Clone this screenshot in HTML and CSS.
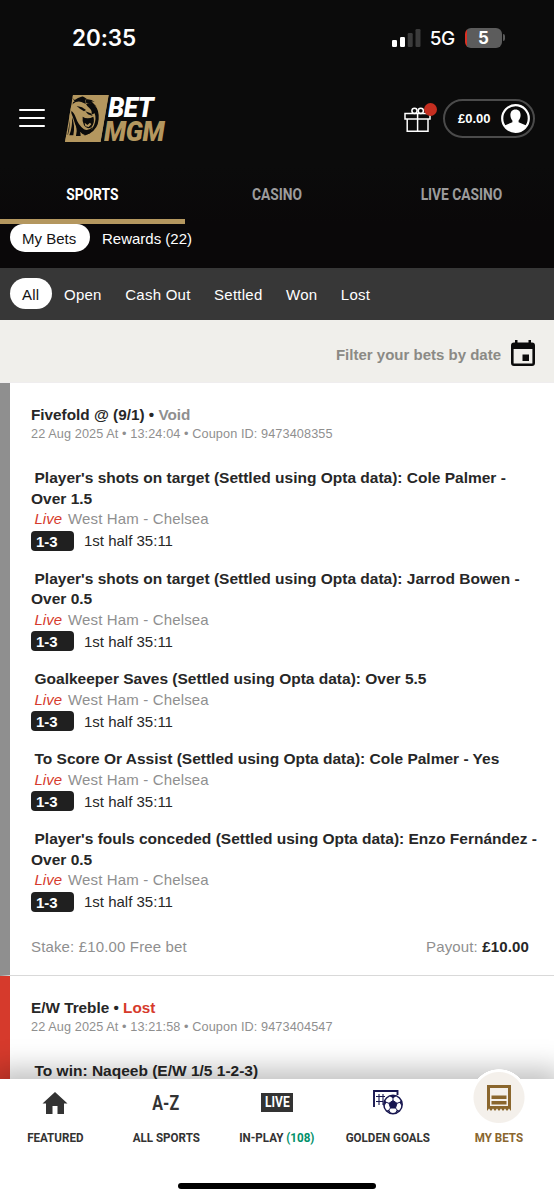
FILE: index.html
```html
<!DOCTYPE html>
<html lang="en">
<head>
<meta charset="utf-8">
<title>My Bets</title>
<link rel="stylesheet" href="styles.css">
</head>
<body>
<div class="app">
  <div class="status">
    <span class="time">20:35</span>
    <div class="signals">
      <svg class="bars" width="29" height="18" viewBox="0 0 29 18"><rect x="0" y="11" width="5" height="7" rx="1.2" fill="#fff"/><rect x="8" y="8" width="5" height="10" rx="1.2" fill="#fff"/><rect x="15.700" y="4" width="5" height="14" rx="1.2" fill="#3b3b3b"/><rect x="23.5" y="0" width="5" height="18" rx="1.2" fill="#3b3b3b"/></svg>
      <span class="net">5G</span>
      <span class="battery">5</span>
      <span class="battery-tip"></span>
    </div>
  </div>
  <header class="header">
    <div class="menu"><i></i><i></i><i></i></div>
    <div class="logo">
      <svg width="44" height="48" viewBox="0 0 44 48">
        <path d="M8 0H43.500L35.500 47H0Z" fill="#b4975f"/>
        <g transform="translate(-3 -3) scale(.3333)" fill="#0b0b0b">
          <path d="M27 12Q24 35 24 48L32 36Q45 26 58 30L72 36Q66 26 74 20L62 13L48 18L38 24Z"/>
          <path d="M72 36Q86 28 98 40Q112 54 110 82Q108 110 84 124L64 132Q88 120 96 100Q104 80 98 64L88 68Q92 56 82 48Q76 44 72 36Z"/>
          <path d="M72 22Q88 20 98 30L88 28L104 44L84 34L70 32Z"/>
          <path d="M44 42L60 46L72 54L66 58L54 50Z"/>
          <path d="M70 58L86 64L92 72L78 67Z"/>
          <path d="M62 74Q76 84 94 74Q100 90 88 106Q74 114 66 100Q60 88 62 74Z"/>
          <path d="M24 54Q36 60 42 78Q48 98 66 112Q80 118 92 104L84 124L70 130Q48 120 40 98Q34 76 24 54Z"/>
          <path d="M20 66Q28 90 18 128H12Z"/>
          <path d="M30 76Q40 100 34 130H22Q32 104 30 76Z"/>
          <path d="M42 98Q56 112 56 132H42Q46 116 42 98Z"/>
          <path d="M31 20L38 28L31 32Z" fill="#b4975f"/>
          <path d="M68 92L76 99L84 92L88 97L80 105L70 103Z" fill="#b4975f"/>
        </g>
        <path d="M8.500.6H43L35 46.400H.8Z" fill="none" stroke="#b4975f" stroke-width="1.200"/>
      </svg>
      <div class="word"><b class="bet">BET</b><b class="mgm">MGM</b></div>
    </div>
    <div class="gift">
      <svg width="28" height="26" viewBox="0 0 28 26" fill="none" stroke="#fff" stroke-width="1.500"><rect x="1" y="6.500" width="25" height="5.500"/><path d="M3.200 12V24.200H24V12M13.600 6V24"/><circle cx="10.500" cy="3.800" r="2.600"/><circle cx="16.800" cy="3.800" r="2.600"/></svg>
      <span class="dot"></span>
    </div>
    <div class="balance">
      <span>£0.00</span>
      <svg width="29" height="29" viewBox="0 0 29 29"><circle cx="14.500" cy="14.500" r="13.300" fill="#0b0b0b" stroke="#fff" stroke-width="2.200"/><path d="M14.500 5.500c3.500 0 5.100 2.400 5.100 5.800 0 2.200-.9 4-2 5.100v1.800l7.700 3.200A13 13 0 0 1 14.500 28 13 13 0 0 1 3.700 21.400l7.700-3.200v-1.800c-1.100-1.100-2-2.900-2-5.100 0-3.400 1.600-5.800 5.100-5.800Z" fill="#fff"/></svg>
    </div>
  </header>
  <nav class="tabs">
    <div class="tab on"><span>SPORTS</span></div>
    <div class="tab"><span>CASINO</span></div>
    <div class="tab"><span>LIVE CASINO</span></div>
  </nav>
  <div class="sections"><span class="pill top">My Bets</span><span class="rewards">Rewards (22)</span></div>
  <div class="filters"><span class="pill">All</span><span>Open</span><span>Cash Out</span><span>Settled</span><span>Won</span><span>Lost</span></div>
  <div class="date"><span>Filter your bets by date</span>
    <svg width="24" height="27" viewBox="0 0 24 27"><path d="M4 0H6.500V2.500H17.500V0H20V2.500H21C23 2.500 24 3.500 24 5.500V23C24 25 23 26 21 26H3C1 26 0 25 0 23V5.500C0 3.500 1 2.500 3 2.500H4ZM2.600 9V23.500H21.400V9Z" fill="#0b0b0b" fill-rule="evenodd"/><rect x="11.500" y="14.500" width="6.500" height="6.500" fill="#0b0b0b"/></svg>
  </div>
  <main class="bets">
    <section class="bet-card">
      <h2>Fivefold @ (9/1) • <em class="void">Void</em></h2>
      <p class="meta">22 Aug 2025 At • 13:24:04 • Coupon ID: 9473408355</p>
      <div class="leg"><h3>Player's shots on target (Settled using Opta data): Cole Palmer -<br>Over 1.5</h3><p class="match"><i>Live</i>West Ham - Chelsea</p><p class="score"><b>1-3</b>1st half 35:11</p></div>
      <div class="leg"><h3>Player's shots on target (Settled using Opta data): Jarrod Bowen -<br>Over 0.5</h3><p class="match"><i>Live</i>West Ham - Chelsea</p><p class="score"><b>1-3</b>1st half 35:11</p></div>
      <div class="leg"><h3>Goalkeeper Saves (Settled using Opta data): Over 5.5</h3><p class="match"><i>Live</i>West Ham - Chelsea</p><p class="score"><b>1-3</b>1st half 35:11</p></div>
      <div class="leg"><h3>To Score Or Assist (Settled using Opta data): Cole Palmer - Yes</h3><p class="match"><i>Live</i>West Ham - Chelsea</p><p class="score"><b>1-3</b>1st half 35:11</p></div>
      <div class="leg"><h3>Player's fouls conceded (Settled using Opta data): Enzo Fernández -<br>Over 0.5</h3><p class="match"><i>Live</i>West Ham - Chelsea</p><p class="score"><b>1-3</b>1st half 35:11</p></div>
      <div class="totals"><span>Stake: £10.00 Free bet</span><span>Payout: <b>£10.00</b></span></div>
    </section>
    <section class="bet-card lost">
      <h2>E/W Treble • <em>Lost</em></h2>
      <p class="meta second">22 Aug 2025 At • 13:21:58 • Coupon ID: 9473404547</p>
      <div class="leg"><h3>To win: Naqeeb (E/W 1/5 1-2-3)</h3></div>
    </section>
  </main>
  <footer class="dock">
    <div class="item"><div class="ico"><svg width="26" height="22" viewBox="0 0 26 22"><path d="M13 0L25.500 11.500H22V22H15.500V14H10.500V22H4V11.500H.5Z" fill="#333"/></svg></div><span>FEATURED</span></div>
    <div class="item"><div class="ico"><b class="az">A-Z</b></div><span>ALL SPORTS</span></div>
    <div class="item"><div class="ico"><b class="live"><span>LIVE</span></b></div><span>IN-PLAY <em>(108)</em></span></div>
    <div class="item"><div class="ico"><svg width="30" height="25" viewBox="0 0 30 25" fill="none" stroke="#17164f"><path d="M1 17V1H24.500V5" stroke-width="1.900"/><path d="M6 4V15M10 4V15M3 6.500H12M3 11.500H10" stroke-width="1.100"/><circle cx="20" cy="14.500" r="9.200" fill="#fff" stroke-width="1.500"/><path d="M20 10.500L24 13.300L22.500 18H17.500L16 13.300Z" fill="#17164f"/><path d="M20 10.500V7M24 13.300L27.500 12M22.500 18L25 21M17.500 18L15 21M16 13.300L12.500 12" stroke-width="1"/><path d="M16.500 5.900L20 8.300L23.500 5.900ZM28.500 9.500L26.500 12.500L29 16.500ZM26.500 20L23.500 20.300L22 23.500ZM13.500 20L16.500 20.300L18 23.500ZM11.500 9.500L13.500 12.500L11 16.500Z" fill="#17164f" stroke="none"/></svg></div><span>GOLDEN GOALS</span></div>
    <div class="item active"><div class="ico round"><svg width="24" height="26" viewBox="0 0 24 26"><path d="M0 0H24V26L22 23.500L20 26L18 23.500L16 26L14 23.500L12 26L10 23.500L8 26L6 23.500L4 26L2 23.500L0 26ZM3 3V21H21V3Z" fill="#8a662d" fill-rule="evenodd"/><path d="M4.500 10.500H19.500V14H4.500ZM4.500 16H19.500V19.500H4.500Z" fill="#8a662d"/></svg></div><span>MY BETS</span></div>
    <div class="home-bar"></div>
  </footer>
</div>
</body>
</html>
```
FILE: styles.css
```css
*{box-sizing:border-box}
body{margin:0;font-family:"Liberation Sans",Arial,sans-serif;background:#fff;color:#272727}
h2,h3,p{margin:0}
em{font-style:normal}
svg{display:block;flex:none}
.app{width:554px;height:1200px;display:flex;flex-direction:column;position:relative;overflow:hidden}
.status{height:75px;background:#0b0b0b;color:#fff;display:flex;justify-content:space-between;padding:0 49px 0 72px;flex:none}
.time{font:600 22.500px/76px Inter,sans-serif;letter-spacing:-.1px}
.signals{display:flex;align-items:center;height:75px}
.net{font:500 19px/24px Inter,sans-serif;margin:2px 10px 0 9px;letter-spacing:-.3px}
.battery{width:37px;height:20px;border-radius:6px;background:linear-gradient(90deg,#dc3023 2px,#5c5c5c 2px);font:700 17px/20px Inter,sans-serif;text-align:center}
.battery-tip{width:2px;height:7px;border-radius:0 3px 3px 0;background:#5c5c5c;margin-left:1px}
.header{height:90px;background:#0b0b0b;display:flex;align-items:flex-start;padding:20px 19px 0 19px;flex:none}
.menu{width:26px;display:flex;flex-direction:column;gap:5.500px;padding-top:14px}
.menu i{height:2.400px;border-radius:1px;background:#fff}
.logo{display:flex;margin-left:20px}
.word{width:70px;padding-top:1px;margin-left:-1px}
.word b{display:block;height:23px;font:italic 900 28px/23px Roboto,"Liberation Sans",sans-serif;letter-spacing:-.5px;transform-origin:0 0;transform:scaleX(.93)}
.bet{color:#fff}
.word .mgm{color:#b4975f;margin-left:-4px;margin-top:1px}
.gift{position:relative;margin:12px 11px 0 auto}
.dot{position:absolute;width:13px;height:13px;border-radius:50%;background:#c52e20;right:-5px;top:-4px}
.balance{width:92px;height:39px;border:2px solid #4b4b4b;border-radius:20px;margin-top:4px;display:flex;align-items:center;justify-content:space-between;padding:0 3px 0 13px;color:#fff;font-weight:bold;font-size:13px}
.tabs{display:grid;grid-template-columns:repeat(3,1fr);height:59px;background:linear-gradient(#0b0b0b,#0a0809);flex:none}
.tab{display:flex;justify-content:center;padding-top:20px;border-bottom:5px solid transparent;font:700 16px/20px Roboto,sans-serif;color:#9c9c9c}
.tab span{transform:scaleX(.86);white-space:nowrap}
.on{color:#fff;border-color:#b4975f}
.sections{height:44px;background:#0a0809;padding-left:10px;display:flex;color:#fff;font-size:15px;flex:none}
.pill{background:#fff;color:#141414;border-radius:16px;height:31px;line-height:32px;padding:0 12px}
.pill.top{width:80px;height:28px;line-height:29px;border-radius:13px 13px 15px 15px}
.rewards{line-height:29px;margin-left:12px}
.filters{height:52px;background:#373737;color:#fff;font-size:15px;letter-spacing:.25px;display:flex;gap:23.500px;padding:10px 0 0 10px;line-height:33px;flex:none}
.filters .pill{margin-right:-11.500px;width:42px;line-height:33px}
.date{height:63px;background:#f0efeb;border-bottom:1px solid #efedee;padding:4px 19px 0;display:flex;align-items:center;justify-content:flex-end;gap:10px;color:#8b8a85;font-size:15px;font-weight:bold;flex:none}
.date span{padding-top:2px}
.bets{flex:none}
.bet-card{height:593px;border-left:10.500px solid #8f8f8f;border-bottom:1px solid #d9d9d9;padding:21px 25px 0 21px}
.lost{border-left-color:#d63a2c}
h2{font-size:15.300px;line-height:21px}
h2 em{color:#d63a2c}
h2 .void{color:#8f8f8f}
.meta{font-size:12.700px;line-height:18px;color:#8f8f8f;letter-spacing:.1px;margin-bottom:25px;white-space:nowrap}
.leg{margin-bottom:17px}
h3{font-size:15.500px;line-height:20.500px;text-indent:3.500px;white-space:nowrap}
.match{font-size:15px;line-height:20.500px;color:#8f8f8f;letter-spacing:.15px}
.match i{color:#d63a2c;margin:0 6px 0 3.500px;letter-spacing:0}
.score{font-size:15px;height:22px;display:flex;align-items:center}
.score b{width:43px;height:20px;border-radius:4px;background:#202020;color:#fff;font-size:15px;line-height:21px;padding-left:5px;margin-right:10px}
.totals{display:flex;justify-content:space-between;font-size:15px;line-height:20px;color:#8f8f8f;margin-top:24px;letter-spacing:.15px}
.totals b{color:#272727}
.dock{position:absolute;left:0;right:0;top:1079px;height:121px;background:#fff;display:grid;grid-template-columns:repeat(5,1fr);box-shadow:0 -2px 26px 8px rgba(0,0,0,.25)}
.item{display:flex;flex-direction:column;align-items:center;font:700 12.900px/16px Roboto,sans-serif;color:#333}
.ico{height:51px;display:flex;align-items:center;justify-content:center;padding-bottom:4px}
.item>span{transform:scaleX(.9);white-space:nowrap}
.az{font:700 20px/22px Roboto,sans-serif;transform:scaleX(.8)}
.live{background:#333;color:#fff;width:32px;height:19px;display:flex;justify-content:center;font:700 14px/19px Roboto,sans-serif}
.live span{transform:scaleX(.86)}
.item em{color:#00906a}
.active{color:#8a662d}
.round{width:56px;height:65px;margin-top:-14px;background:radial-gradient(circle at 50% 50%,#f4f0eb 25px,#fff 26px,#fff 28px,transparent 28.500px);padding:0}
.home-bar{position:absolute;left:178px;top:104px;width:198px;height:6px;border-radius:3px;background:#000}
```
